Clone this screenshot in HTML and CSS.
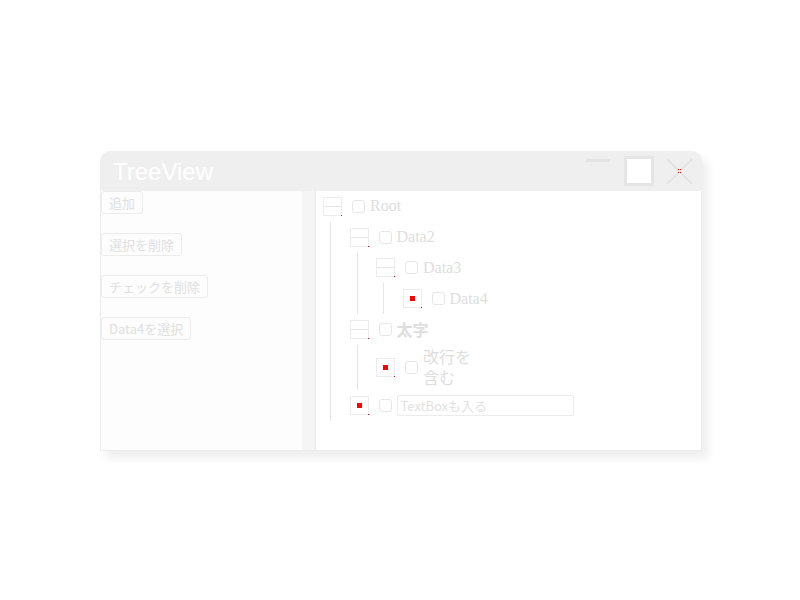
FILE: index.html
```html
<!DOCTYPE html>
<html lang="ja">
<head>
<meta charset="utf-8">
<title>TreeView</title>
<link rel="stylesheet" href="styles.css">
</head>
<body>
<div class="window">
  <div class="titlebar">
    <span class="title">TreeView</span>
    <div class="controls">
      <span class="ctl-min"></span>
      <span class="ctl-max"></span>
      <span class="ctl-close">
        <svg width="27" height="27" viewBox="0 0 27 27">
          <path d="M1 1 L26 26 M26 1 L1 26" stroke="#e4e4e4" stroke-width="2" fill="none"/>
          <rect x="12" y="11" width="1" height="1" fill="#f00"/>
          <rect x="14" y="11" width="1" height="1" fill="#f00"/>
          <rect x="12" y="14" width="1" height="1" fill="#f00"/>
          <rect x="14" y="14" width="1" height="1" fill="#f00"/>
        </svg>
      </span>
    </div>
  </div>
  <div class="content">
    <div class="left">
      <button class="btn">追加</button>
      <button class="btn">選択を削除</button>
      <button class="btn">チェックを削除</button>
      <button class="btn">Data4を選択</button>
    </div>
    <div class="splitter"></div>
    <div class="right">
      <div class="node">
        <div class="row"><span class="tog open"></span><span class="chk"></span><span class="lbl">Root</span></div>
        <div class="kids">
          <div class="node">
            <div class="row"><span class="tog open"></span><span class="chk"></span><span class="lbl">Data2</span></div>
            <div class="kids">
              <div class="node">
                <div class="row"><span class="tog open"></span><span class="chk"></span><span class="lbl">Data3</span></div>
                <div class="kids">
                  <div class="node">
                    <div class="row"><span class="tog leaf"></span><span class="chk"></span><span class="lbl">Data4</span></div>
                  </div>
                </div>
              </div>
            </div>
          </div>
          <div class="node">
            <div class="row"><span class="tog open"></span><span class="chk"></span><span class="lbl bold">太字</span></div>
            <div class="kids">
              <div class="node">
                <div class="row tall"><span class="tog leaf"></span><span class="chk"></span><span class="lbl jp wrap">改行を含む</span></div>
              </div>
            </div>
          </div>
          <div class="node">
            <div class="row"><span class="tog leaf"></span><span class="chk"></span><input class="tbox" type="text" placeholder="TextBoxも入る"></div>
          </div>
        </div>
      </div>
    </div>
  </div>
</div>
</body>
</html>
```

FILE: styles.css
```css
html, body {
  margin: 0;
  padding: 0;
  background: #ffffff;
}
body {
  width: 800px;
  height: 600px;
  padding: 151px 0 0 100px;
  box-sizing: border-box;
  font-family: "Noto Sans CJK JP", "Liberation Sans", sans-serif;
}
.window {
  width: 602px;
  height: 300px;
  display: flex;
  flex-direction: column;
  border-radius: 10px 10px 0 0;
  box-shadow: 6px 7px 10px rgba(0, 0, 0, 0.07);
  background: #fdfdfd;
}
.titlebar {
  height: 40px;
  background: #efefef;
  border-radius: 10px 10px 0 0;
  display: flex;
  align-items: center;
  justify-content: space-between;
  padding: 0 9px 0 13px;
  box-sizing: border-box;
  flex: none;
}
.title {
  color: #ffffff;
  font-family: "Liberation Sans", Arial, sans-serif;
  font-size: 24px;
  line-height: 28px;
  margin-top: 1px;
}
.controls {
  display: flex;
  align-items: center;
}
.ctl-min {
  display: block;
  width: 24px;
  height: 3px;
  background: #e3e3e3;
  margin-right: 14px;
  margin-bottom: 21px;
}
.ctl-max {
  display: block;
  width: 30px;
  height: 30px;
  box-sizing: border-box;
  border: 3px solid #e5e5e5;
  background: #ffffff;
  margin-right: 12px;
}
.ctl-close {
  display: block;
  width: 27px;
  height: 27px;
}
.ctl-close svg { display: block; }
.content {
  flex: 1;
  display: flex;
  border: 1px solid #ececec;
  border-top: none;
}
.left {
  width: 201px;
  background: #fdfdfd;
  display: flex;
  flex-direction: column;
  align-items: flex-start;
  gap: 19px;
}
.btn {
  height: 23px;
  padding: 0 7px;
  border: 1px solid #ececec;
  border-radius: 3px;
  background: #fdfdfd;
  color: #e0e0e0;
  font-family: "Noto Sans CJK JP", "Liberation Sans", sans-serif;
  font-size: 13px;
  line-height: 21px;
  margin: 0;
}
.splitter {
  width: 13px;
  background: #f5f5f5;
  border-right: 1px solid #ebebeb;
}
.right {
  flex: 1;
  background: #ffffff;
  padding-left: 7px;
}
.row {
  height: 30.75px;
  display: flex;
  align-items: center;
}
.row.tall {
  height: 45px;
}
.tog {
  position: relative;
  width: 19px;
  height: 19px;
  box-sizing: border-box;
  border: 1px solid #ececec;
  background: #ffffff;
  flex: none;
  margin-right: 10px;
}
.tog::after {
  content: "";
  position: absolute;
  right: -1px;
  bottom: -1px;
  width: 1px;
  height: 1px;
  background: #ff0000;
}
.tog.open::before {
  content: "";
  position: absolute;
  left: 0;
  right: 0;
  top: 8px;
  height: 1px;
  background: #e6e6e6;
}
.tog.leaf::before {
  content: "";
  position: absolute;
  left: 6px;
  top: 6px;
  width: 5px;
  height: 5px;
  background: #ff0000;
}
.chk {
  width: 13px;
  height: 13px;
  box-sizing: border-box;
  border: 1px solid #e6e6e6;
  border-radius: 3px;
  flex: none;
  margin-right: 5px;
}
.lbl {
  font-family: "Liberation Serif", "Times New Roman", serif;
  font-size: 16px;
  color: #dedede;
  line-height: 20px;
}
.lbl.bold {
  font-family: "Noto Sans CJK JP", "Liberation Sans", sans-serif;
  font-weight: bold;
}
.lbl.jp {
  font-family: "Noto Sans CJK JP", "Liberation Sans", sans-serif;
}
.lbl.wrap {
  width: 50px;
  line-height: 21px;
}
.kids {
  margin-left: 7px;
  border-left: 1px solid #e4e4e4;
  padding-left: 18.5px;
}
.tbox {
  width: 177px;
  height: 21px;
  box-sizing: border-box;
  border: 1px solid #ececec;
  border-radius: 2px;
  padding: 0 4px 0 3px;
  font-family: "Noto Sans CJK JP", "Liberation Sans", sans-serif;
  font-size: 13px;
  color: #dadada;
  outline: none;
  margin: 0;
}
.tbox::placeholder {
  color: #e2e2e2;
}
```
